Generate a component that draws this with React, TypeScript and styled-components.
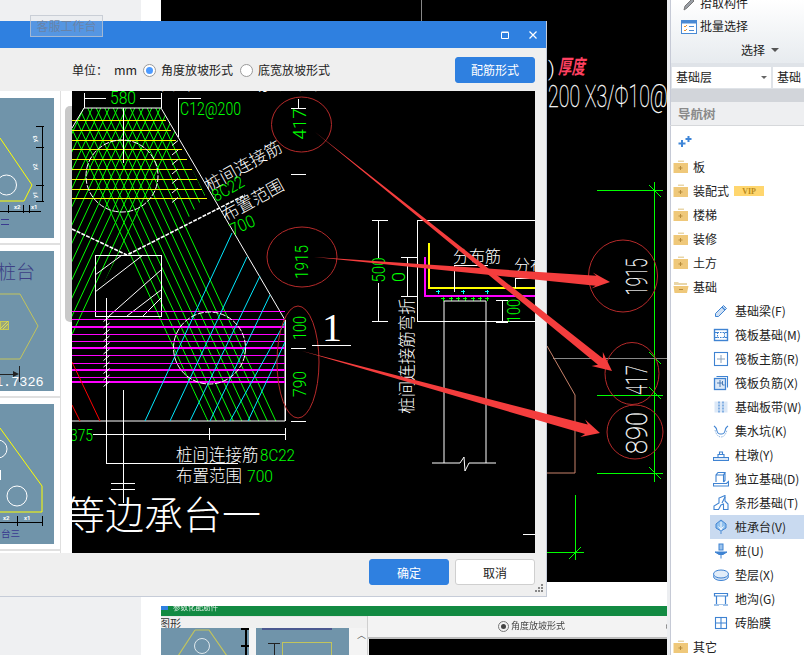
import React from "react";
import styled, { createGlobalStyle } from "styled-components";

const UI = '"Noto Sans CJK SC", "Liberation Sans", sans-serif';
const CAD = 'Roboto, "Liberation Sans", "Noto Sans CJK SC", sans-serif';
const BLUE = "#2f80e0";

const Global = createGlobalStyle`
  html, body { margin: 0; padding: 0; background: #fff; }
  #root { width: 804px; height: 655px; overflow: hidden; }
`;

const Desktop = styled.div`
  position: relative; width: 804px; height: 655px; overflow: hidden; display: flex;
  font-family: ${UI}; font-size: 12px; line-height: 1.2; color: #222; background: #fff;
`;
const LeftGutter = styled.div`width: 141px; background: #eff0f2; flex: none;`;
const WhiteGutter = styled.div`width: 20px; background: #fff; flex: none;`;
const MainColumn = styled.div`width: 506px; flex: none; display: flex; flex-direction: column;`;
const CadCanvas = styled.svg`display: block; width: 506px; height: 582px; background: #000; flex: none;`;
const WhiteGap = styled.div`height: 24px; background: #fff; flex: none;`;

/* lower window */
const LowerWindow = styled.div`flex: 1; display: flex; flex-direction: column; background: #f0f0f0; overflow: hidden;`;
const LowerTitle = styled.div`
  height: 10px; background: #128a42; display: flex; align-items: flex-start; flex: none; overflow: hidden;
  color: #dfeee4; font-size: 7.5px; line-height: 1px; filter: blur(.3px);
`;
const LowerAppIcon = styled.span`width: 7px; height: 4px; background: #2f80e0; margin-right: 5px;`;
const LowerBody = styled.div`flex: 1; display: flex;`;
const LowerLeft = styled.div`width: 206px; flex: none; display: flex; flex-direction: column; border-right: 1px solid #cfcfcf;`;
const LowerLabel = styled.div`height: 11px; font-size: 11px; line-height: 12px; color: #333; margin-left: -2px; border-top: 1px solid #e6e6e6; overflow: hidden;`;
const LowerThumbs = styled.div`flex: 1; display: flex; gap: 7px; background: #f4f4f4;`;
const LowerThumb = styled.svg<{ $w: number }>`display: block; width: ${(p) => p.$w}px; height: 27px; background: #7094aa; flex: none;`;
const LowerScrollTop = styled.div`flex: 1; text-align: center; color: #555; font-size: 9px; line-height: 14px;`;
const LowerRight = styled.div`flex: 1; display: flex; flex-direction: column;`;
const LowerBar = styled.div`
  height: 21px; flex: none; border-bottom: 2px solid #bdbdbd; background: #f3f3f3; display: flex;
  align-items: center; font-size: 9px; color: #444; padding-left: 130px; gap: 2px; filter: blur(.25px);
  overflow: hidden; white-space: nowrap;
`;
const LowerBlack = styled.div`flex: 1; background: #000; margin-left: 1px;`;
const LowerRadio = styled.span<{ $on?: boolean; $gap?: number }>`
  width: 9px; height: 9px; flex: none; border-radius: 50%; border: 1px solid #777; display: inline-flex;
  align-items: center; justify-content: center; margin-left: ${(p) => p.$gap ?? 0}px;
  &::after { content: ""; width: 5px; height: 5px; border-radius: 50%; background: ${(p) => (p.$on ? "#444" : "transparent")}; }
`;

/* right panel */
const RightPanel = styled.aside`
  width: 137px; flex: none; height: 655px; overflow: hidden; background: #fff;
  border-left: 3px solid #eceef1; box-sizing: border-box; display: flex; flex-direction: column;
  box-shadow: inset 1px 0 0 #c6cad6;
`;
const Ribbon = styled.div`
  height: 63px; flex: none; overflow: hidden; background: linear-gradient(#ffffff, #e7ebef);
  padding-left: 11px; box-shadow: inset 1px 0 0 #c6cad6;
`;
const RibbonItem = styled.div<{ $first?: boolean }>`
  height: 23px; display: flex; align-items: center; gap: 3px; font-size: 12px; color: #1c1c1c;
  margin-top: ${(p) => (p.$first ? "-8px" : "0")};
`;
const RibbonLabel = styled.div`
  height: 24px; display: flex; align-items: center; gap: 6px; padding-left: 60px; font-size: 12px; color: #222;
`;
const Caret = styled.span`width: 0; height: 0; border: 4px solid transparent; border-top: 4px solid #555; border-bottom: 0;`;
const ComboRow = styled.div`
  height: 39px; flex: none; padding: 4px 0 0 2px; display: flex; gap: 2px; box-sizing: border-box;
  background: linear-gradient(#dfe3e8 0, #dfe3e8 26px, #d2d5da 26px); box-shadow: inset 1px 0 0 #c6cad6;
`;
const Combo = styled.div<{ $w: number }>`
  width: ${(p) => p.$w}px; height: 21px; flex: none; background: #fff; display: flex; align-items: center;
  justify-content: space-between; padding: 0 4px; box-sizing: border-box; font-size: 12px; color: #222;
`;
const SmallCaret = styled.span`width: 0; height: 0; border: 3px solid transparent; border-top: 3px solid #666; border-bottom: 0;`;
const NavHeader = styled.div`
  height: 23px; flex: none; background: #eeeff1; color: #8a8a8a; font-size: 12.5px; font-weight: 700;
  padding-left: 8px; display: flex; align-items: center; border-bottom: 1px solid #d6d8db; box-shadow: inset 1px 0 0 #c6cad6;
`;
const NavTools = styled.div`height: 29px; flex: none; padding-left: 7px; display: flex; align-items: flex-start; padding-top: 6px; box-sizing: border-box;`;
const Tree = styled.div`display: flex; flex-direction: column;`;
const TreeRow = styled.div<{ $sub?: boolean; $selected?: boolean }>`
  height: 24px; flex: none; display: flex; align-items: center; white-space: nowrap; box-sizing: border-box;
  margin-left: ${(p) => (p.$sub ? "40px" : "0")};
  padding-left: 3px; gap: ${(p) => (p.$sub ? "6px" : "4px")};
  background: ${(p) => (p.$selected ? "#c9daf0" : "transparent")};
  font-size: 12px; color: #222;
`;
const VipTag = styled.span`
  width: 30px; height: 10px; background: #ffd66e; color: #b98a1c; font: 700 8px "Liberation Serif", serif;
  display: inline-flex; align-items: center; justify-content: center; margin-left: 1px;
`;

/* dialog */
const Dialog = styled.section`
  position: absolute; left: 0; top: 21px; width: 547px; height: 576px; box-sizing: border-box;
  background: #efefef; border-right: 1px solid #c6ccd8; border-bottom: 1px solid #c6ccd8;
  display: flex; flex-direction: column; z-index: 2;
`;
const TitleBar = styled.header`
  height: 27px; flex: none; background: ${BLUE}; display: flex; align-items: center; justify-content: flex-end;
  gap: 20px; padding-right: 9px;
`;
const Toolbar = styled.div`
  height: 43px; flex: none; display: flex; align-items: center; box-sizing: border-box;
  padding: 2px 11px 0 72px; font-size: 12px; color: #222;
`;
const UnitLabel = styled.span`width: 42px;`;
const UnitValue = styled.span`width: 29px; font-size: 12.5px; line-height: 14px; margin-top: -2px;`;
const RadioWrap = styled.label`display: flex; align-items: center; gap: 5px; margin-right: 7px;`;
const RadioDot = styled.span<{ $on?: boolean }>`
  width: 13px; height: 13px; box-sizing: border-box; border-radius: 50%; background: #fff; border: 1px solid #9a9a9a;
  display: inline-flex; align-items: center; justify-content: center;
  &::after { content: ""; width: 7px; height: 7px; border-radius: 50%; background: ${(p) => (p.$on ? "#4e9bff" : "transparent")}; }
`;
const ToolbarButtonSlot = styled.div`margin-top: -2px; margin-left: auto;`;
const ActionButton = styled.button<{ $primary?: boolean }>`
  display: block; width: 80px; height: 26px; box-sizing: border-box; border-radius: 3px; font-family: ${UI}; font-size: 12px; padding: 0;
  background: ${(p) => (p.$primary ? BLUE : "#fff")}; color: ${(p) => (p.$primary ? "#fff" : "#222")};
  border: 1px solid ${(p) => (p.$primary ? BLUE : "#cfcfcf")};
`;
const DialogBody = styled.div`height: 462px; flex: none; display: flex; padding-right: 11px;`;
const ThumbList = styled.div`
  width: 61px; flex: none; background: #fff; display: flex; flex-direction: column; overflow: hidden;
  padding-top: 7px; box-sizing: border-box; border-right: 1px solid #dfdfdf;
`;
const ThumbItem = styled.div`
  flex: none; height: 153px; box-sizing: border-box; padding-bottom: 6px;
  border-bottom: 2px solid #e0e0e0;
  &:not(:first-child) { padding-top: 6px; }
  &:first-child { height: 147px; }
`;
const ThumbSvg = styled.svg`display: block; width: 54px; height: 140px; background: #7094aa;`;
const ScrollTrack = styled.div`width: 11px; flex: none; background: #fff; padding-top: 15px; padding-left: 4px; box-sizing: border-box;`;
const ScrollThumb = styled.div`width: 7px; height: 216px; background: #c9c9c9; border-radius: 5px 0 0 5px;`;
const Drawing = styled.svg`display: block; width: 463px; height: 462px; background: #000; flex: none;`;
const Footer = styled.footer`
  flex: 1; display: flex; justify-content: flex-end; gap: 6px; padding: 6px 11px 0 0; position: relative;
`;
const Grip = styled.svg`position: absolute; right: 3px; bottom: 4px; width: 9px; height: 8px;`;
const Tooltip = styled.div`
  position: absolute; left: 30px; top: 15px; width: 73px; height: 22px; box-sizing: border-box; z-index: 4;
  border: 1px solid rgba(190, 195, 205, .75); background: rgba(225, 228, 232, .22); color: rgba(105, 130, 165, .95);
  font-size: 12px; text-align: center; line-height: 20px;
`;
const Overlay = styled.svg`position: absolute; left: 0; top: 0; width: 804px; height: 655px; z-index: 3; pointer-events: none;`;

/* drawing helpers */
type TP = { x: number; y: number; s: number; len?: number; fill?: string; rot?: number; anchor?: string; serif?: boolean; cjk?: boolean; w?: number; italic?: boolean; bright?: boolean; children: React.ReactNode };
const T = ({ x, y, s, len, fill = "#fff", rot, anchor = "start", serif, cjk, w, italic, bright, children }: TP) => (
  <text
    x={x} y={y} fontSize={s} fill={fill} textAnchor={anchor} fontWeight={w ?? (serif ? 400 : 300)}
    fontStyle={italic ? "italic" : undefined}
    stroke={bright ? fill : undefined} strokeWidth={bright ? 0.35 : undefined}
    fontFamily={serif ? '"Liberation Serif", serif' : cjk ? '"Noto Sans CJK SC", sans-serif' : CAD}
    textLength={len} lengthAdjust={len ? "spacingAndGlyphs" : undefined}
    transform={rot !== undefined ? `rotate(${rot} ${x} ${y})` : undefined}
  >{children}</text>
);
type LP = { p: string; c?: string; w?: number; d?: string; crisp?: boolean };
const L = ({ p, c = "#fff", w = 1, d, crisp }: LP) => (
  <path d={p} fill="none" stroke={c} strokeWidth={w} strokeDasharray={d} shapeRendering={crisp ? "crispEdges" : undefined} />
);

const family = (slope: number, step: number, from: number, to: number) => {
  let out = "";
  for (let c = from; c < to; c += step) {
    out += `M${c + slope * 60} 60L${c + slope * 460} 460`;
  }
  return out;
};
const ticks = (x: number, y0: number, y1: number, step: number) => {
  let out = "";
  for (let y = y0; y <= y1; y += step) out += `M${x - 3} ${y + 2.5}L${x + 3} ${y - 2.5}`;
  return out;
};
const arrow = (sx: number, sy: number, tx: number, ty: number, head: number, hw: number, sw: number) => {
  const dx = tx - sx, dy = ty - sy, l = Math.hypot(dx, dy), ux = dx / l, uy = dy / l, nx = -uy, ny = ux;
  const bx = tx - ux * head, by = ty - uy * head;
  const nb = head * 0.78;
  const mx = tx - ux * nb, my = ty - uy * nb;
  const pts = [
    [sx, sy],
    [mx + nx * sw, my + ny * sw],
    [bx + nx * hw, by + ny * hw],
    [tx, ty],
    [bx - nx * hw, by - ny * hw],
    [mx - nx * sw, my - ny * sw],
  ];
  return pts.map((q) => q.join(",")).join(" ");
};

const MainDrawing = () => (
  <Drawing viewBox="72 91 463 462">
    <defs>
      <clipPath id="bandA"><polygon points="72,128 84,108 161,108 205,195 187,220 280,421 207,421 72,134" /></clipPath>
      <clipPath id="bandB"><polygon points="72,128 84,108 161,108 178,137 72,345" /></clipPath>
    </defs>
    <g clipPath="url(#bandA)"><L p={family(1 / 2.15, 8.5, -260, 300)} c="#00ff00" /></g>
    <g clipPath="url(#bandB)"><L p={family(-1 / 2.15, 8.5, 100, 600)} c="#00ff00" /></g>

    {/* yellow bars */}
    {[[120, 166], [130, 171], [140, 176], [149, 182], [159, 187], [169, 192], [179, 197], [189, 202], [198, 207]].map(([y, x]) => (
      <L key={y} p={`M72 ${y}H${x}`} c="#ffff00" crisp />
    ))}
    {/* cap outline */}
    <L p="M72 128L84 108H161L178 137L285 320V421H72" />
    <L p="M84 98H161M84 93V108M161 93V108" crisp />
    <rect x="106" y="91" width="34" height="14" fill="#000" />
    <T x={110} y={104} s={18} len={26} fill="#00ff00">580</T>
    <L p="M178 137V98H201" crisp />
    <T x={180} y={115} s={19} len={61} fill="#00ff00">C12@200</T>
    <circle cx="122" cy="176" r="36" fill="none" stroke="#fff" strokeDasharray="6 1.5" />
    <L p="M123 108V163" crisp />
    <L p={ticks(175, 143, 200, 9.5)} />
    <L p="M72 229L127 255L245 195" w={1.6} d="4 1.2" />
    <T x={158} y={90} s={20} cjk>合布置向主筋范围示意</T>

    {/* rotated notes */}
    <T x={209} y={192} s={17} rot={-29} cjk>桩间连接筋</T>
    <T x={216} y={202} s={17} rot={-29} len={34} fill="#00ff00">8C22</T>
    <T x={226} y={222} s={17} rot={-29} cjk>布置范围</T>
    <T x={233} y={236} s={17} rot={-25} len={26} fill="#00ff00">700</T>

    {/* square with hatch */}
    <rect x="95.5" y="255.5" width="66" height="61" fill="none" stroke="#fff" />
    <L p="M95 275L122 255M95 292L143 255M109 316L161 270M127 316L161 290M143 316L161 298" />

    {/* magenta */}
    {[311, 319, 327, 334, 341, 348, 355, 363, 370, 377, 382].map((y) => (
      <L key={y} p={`M72 ${y}H285`} c="#ff00ff" w={[327, 348, 370, 382].includes(y) ? 2 : 1} crisp />
    ))}
    <L p="M145 421L232 233M170 421L247 257M190 421L260 276M210 421L270 295M230 421L285 322M248 421L285 342" c="#00e8ff" />
    <circle cx="209.5" cy="348" r="36" fill="none" stroke="#fff" strokeDasharray="6 1.5" />
    <L p="M72 362L100 421M72 405L80 421" c="#ff0000" />

    <L p="M106.5 298V463H238" crisp />
    <L p={ticks(106.5, 319, 385, 6.5)} />
    <L p="M123 390V503M111 483H135M111 489H135" crisp />
    <L p="M93 434H285M123 428V440M209.5 428V440M285 428V440" crisp />
    <T x={70} y={441} s={17} len={23} fill="#00ff00">375</T>

    <T x={176} y={461} s={16.5} cjk>桩间连接筋</T>
    <T x={260} y={461} s={17} len={35} fill="#00ff00">8C22</T>
    <T x={176} y={482} s={16.5} cjk>布置范围</T>
    <T x={247} y={482} s={17} len={26} fill="#00ff00">700</T>
    <T x={66} y={529} s={39} cjk>等边承台一</T>

    {/* side dims */}
    <L p="M291 108H306M291 174H306M291 348H306M291 421H306M298 99V108" crisp />
    <L p="M285 320V421" crisp />
    <T x={306} y={124} s={18} rot={-90} anchor="middle" len={31} fill="#00ff00">417</T>
    <T x={308} y={262} s={18} rot={-90} anchor="middle" len={34} fill="#00ff00">1915</T>
    <T x={306} y={328} s={18} rot={-90} anchor="middle" len={24} fill="#00ff00">100</T>
    <T x={306} y={384} s={18} rot={-90} anchor="middle" len={26} fill="#00ff00">790</T>
    <ellipse cx="301.5" cy="124.5" rx="30" ry="27.5" fill="none" stroke="#b52a2a" />
    <ellipse cx="302" cy="257" rx="35" ry="30" fill="none" stroke="#b52a2a" />
    <ellipse cx="298" cy="362" rx="21" ry="56" fill="none" stroke="#b52a2a" />
    <T x={332} y={341} s={40} serif anchor="middle">1</T>
    <L p="M312 345.5H351" crisp />

    {/* section */}
    <L p="M372 220H388M378 220V258M378 283V321M372 321H388" crisp />
    <T x={385} y={270} s={18} rot={-90} anchor="middle" len={25} fill="#00ff00">500</T>
    <T x={405} y={277} s={18} rot={-90} anchor="middle" fill="#00ff00">0</T>
    <L p="M401 257H417M407 257V296M401 296H417" crisp />
    <T x={413} y={356} s={16.5} rot={-90} anchor="middle" cjk>桩间连接筋弯折</T>
    <L p="M417 220H535M417 220V321H535" crisp />
    <L p="M425 257V296H535" c="#ff00ff" w={2} crisp />
    <L p="M429 243V288H535" c="#ffff00" w={2} crisp />
    {[438, 463, 487].map((x) => <L key={x} p={`M${x - 2} 291.5H${x + 2}M${x} 289.5V293.5`} c="#00ffff" crisp />)}
    {[443, 451, 458, 465, 473, 480, 487].map((x) => <L key={x} p={`M${x - 2} 298.5H${x + 2}M${x} 296.5V300.5`} c="#00ff00" crisp />)}
    <L p="M444 463V301H486V463M432 463H460L464 457L465 471L469 463H496" />
    <T x={453} y={262} s={16} cjk>分布筋</T>
    <T x={514} y={271} s={16} cjk>分布筋</T>
    <L p="M454 292V265H488M515 288V278H535" crisp />
    <L p="M496 300H508M502 300V322M496 322H508" crisp />
    <T x={520} y={311} s={18} rot={-90} anchor="middle" len={24} fill="#00ff00">100</T>
    <L p="M523 534H535" crisp />
  </Drawing>
);

const BackgroundCad = () => (
  <CadCanvas viewBox="161 0 506 582">
    <L p="M421.5 0V21" c="#888" crisp />
    <T x={548} y={76} s={21} fill="#fff">)</T>
    <T x={558} y={74} s={20} len={27} fill="#ff4060" w={700} italic cjk>厚度</T>
    <T x={548} y={107} s={32} len={120} w={100} bright>200 X3/Φ10@</T>
    <L p="M597 190H663M654 182V482M597 395H663M597 473H663" c="#00ff00" crisp />
    <L p="M649 185L661 197M649 352L661 364M649 387L661 399M649 467L661 479" c="#00ff00" />
    <L p="M553 358H667" c="#888" crisp />
    <L p="M547 346L575 395V473H547" c="#c8826a" />
    <L p="M575 495V560M547 552H584" c="#00ff00" crisp />
    <L p="M569 559L581 547" c="#00ff00" />
    <ellipse cx="623" cy="276" rx="34.5" ry="36" fill="none" stroke="#b52a2a" />
    <ellipse cx="632" cy="373.5" rx="27" ry="31" fill="none" stroke="#b52a2a" />
    <ellipse cx="635" cy="432" rx="28" ry="27" fill="none" stroke="#b52a2a" />
    <T x={647} y={277} s={30} rot={-90} anchor="middle" len={37} w={100} bright>1915</T>
    <T x={647} y={380} s={30} rot={-90} anchor="middle" len={30} w={100} bright>417</T>
    <T x={647} y={433} s={30} rot={-90} anchor="middle" len={42} w={100} bright>890</T>
  </CadCanvas>
);

const Thumb1 = () => (
  <ThumbSvg viewBox="0 98 54 140">
    <L p="M0 138L32 185L24 201H0" c="#ffff00" />
    <circle cx="6.5" cy="185" r="10" fill="none" stroke="#fff" />
    <L p="M42 126V201M36 126H44M36 147H44M36 185H44M36 201H44M0 211H41M8 205V213M23 205V213M29 205V213" c="#000" crisp />
    <T x={14} y={209} s={6} w={700}>x2</T>
    <T x={31} y={209} s={6} w={700}>x1</T>
    <T x={37} y={142} s={6} rot={-90} w={700}>y3</T>
    <T x={37} y={170} s={6} rot={-90} w={700}>y2</T>
    <T x={37} y={198} s={6} rot={-90} w={700}>y1</T>
    <L p="M1 219H9M1 224H9" c="#3a3a90" crisp />
  </ThumbSvg>
);
const Thumb2 = () => (
  <ThumbSvg viewBox="0 251 54 140">
    <T x={-3} y={279} s={19} fill="#3c3f85" cjk>桩台</T>
    <L p="M0 294H20L38 326L20 359H0" c="#c2c45c" />
    <rect x="0.5" y="321.5" width="8" height="8" fill="#9aa87a" stroke="#c8ca52" />
    <L p="M0 329L8 321M3 329L8 324" c="#d8da60" />
    <L p="M0 374H16M19.5 366V382" c="#222" crisp />
    <polygon points="19,374 13,371 13,377" fill="#222" />
    <text x="-5" y="386" fontSize="13.5" fill="#fff" fontFamily='"Liberation Mono", monospace'>1.7326</text>
  </ThumbSvg>
);
const Thumb3 = () => (
  <ThumbSvg viewBox="0 404 54 140">
    <L p="M0 428L42 486V512H0" c="#ffff00" />
    <circle cx="17" cy="496" r="10" fill="none" stroke="#fff" />
    <circle cx="-2" cy="449" r="9" fill="none" stroke="#fff" />
    <L p="M0.5 470V480" />
    <L p="M0 522H42M17.5 516V526M42.5 516V526" c="#000" crisp />
    <T x={3} y={520} s={6} w={700}>x2</T>
    <T x={24} y={520} s={6} w={700}>x1</T>
    <T x={1} y={537} s={9.5} w={400} fill="#3a3a90" cjk>台三</T>
  </ThumbSvg>
);

/* icons */
const I = styled.svg`display: block; width: 16px; height: 16px; flex: none;`;
const ic = "#3f83d2";
const Icon = ({ k }: { k: string }) => {
  const s = { fill: "none", stroke: ic, strokeWidth: 1.1 } as const;
  switch (k) {
    case "beam": return <I viewBox="0 0 16 16"><path d="M2.5 10.5L10.5 2.5L13.5 5.5L5.5 13.5H2.5Z" fill="#cfe0f4" stroke={ic} /><path d="M9 4L12 7" {...s} /></I>;
    case "raft": return <I viewBox="0 0 16 16"><rect x="1.5" y="2.5" width="13" height="11" {...s} strokeWidth={1.4} /><rect x="4.5" y="5.5" width="7" height="5" {...s} strokeDasharray="1.5 1" /><path d="M1.5 5.5H4.5M11.5 5.5H14.5M1.5 10.5H4.5M11.5 10.5H14.5" {...s} /></I>;
    case "main": return <I viewBox="0 0 16 16"><rect x="1.5" y="1.5" width="13" height="13" {...s} /><path d="M8 4V12M4 8H12" fill="none" stroke="#8aa0b8" /></I>;
    case "neg": return <I viewBox="0 0 16 16"><rect x="1.5" y="3.5" width="11" height="11" fill="#dbe8f7" stroke={ic} strokeWidth={1.3} /><path d="M3.5 1.5H14.5V12.5" {...s} /><path d="M4 8H10M7 5V12M9.5 6V10H11.5" fill="none" stroke="#4a7bb5" /></I>;
    case "strip": return <I viewBox="0 0 16 16"><rect x="1.5" y="2.5" width="13" height="11" fill="#dbe8f7" /><path d="M6 2.5V13.5M10 2.5V13.5" {...s} strokeDasharray="2 1" /></I>;
    case "pit": return <I viewBox="0 0 16 16"><path d="M1 3C2 4 3 4 3.5 6C4 9 5 11 7 11H9C11 11 12 9 12.5 6C13 4 14 4 15 3" {...s} /><path d="M2 7C3 11 5 14 8 14C11 14 13 11 14 7" fill="none" stroke="#8fb5e2" strokeDasharray="1.5 1" /></I>;
    case "pier": return <I viewBox="0 0 16 16"><rect x="0.5" y="10.5" width="15" height="3" fill="#dbe8f7" stroke={ic} /><path d="M5 10.5V7.5H11V10.5M6.5 7.5V5H9.5V7.5" {...s} /></I>;
    case "iso": return <I viewBox="0 0 16 16"><path d="M0.5 12.5H13.5L15.5 10.5V15H0.5Z" {...s} /><path d="M3 11V4L5 1.5H12L10.5 4V11M3 4H10.5M10.5 11L12 9.5V1.5" {...s} /></I>;
    case "bar": return <I viewBox="0 0 16 16"><path d="M1 14.5V11L6 8V3L12 0.5V6L15 9V14.5H10.5V9L8 10L5.5 14.5Z" {...s} /><path d="M12 2L9 8" {...s} /></I>;
    case "cap": return <I viewBox="0 0 16 16"><path d="M8 1L13 5V9L8 12L3 9V5Z" fill="#8fc0ee" stroke={ic} /><path d="M8 3V15M5.5 7.5L8 10.5L10.5 7.5" fill="none" stroke="#fff" /><path d="M8 11V15" {...s} /></I>;
    case "pile": return <I viewBox="0 0 16 16"><rect x="6" y="1" width="4" height="6" fill="#9cc3ec" stroke={ic} /><path d="M2 9H14L10 11.5H6ZM8 11.5V15.5" fill={ic} stroke={ic} /></I>;
    case "pad": return <I viewBox="0 0 16 16"><ellipse cx="8" cy="9.5" rx="7.5" ry="4" fill="#cfe0f4" stroke={ic} /><ellipse cx="8" cy="7" rx="7.5" ry="4" fill="#e2edf9" stroke={ic} /></I>;
    case "ditch": return <I viewBox="0 0 16 16"><path d="M1.5 2.5H14.5V5H1.5ZM3.5 5V13M12.5 5V13M1 14H6M10 14H15" {...s} strokeWidth={1.2} /><path d="M5 13.5H11" fill="none" stroke="#a6c6ea" /></I>;
    default: return <I viewBox="0 0 16 16"><rect x="2.5" y="2.5" width="11" height="11" {...s} /><path d="M8 2.5V13.5M2.5 8H13.5" {...s} /></I>;
  }
};
const Folder = ({ open }: { open?: boolean }) =>
  open ? (
    <I viewBox="0 0 16 16"><path d="M1 3H5L6 4H14V6H1Z" fill="#e9d6a8" /><path d="M0.5 7H15.5L14 14H1.5Z" fill="#efc87a" /><path d="M6 10.5H10" stroke="#b58a3a" /></I>
  ) : (
    <I viewBox="0 0 16 16"><path d="M5 1.5H11V3H5Z" fill="#e9d6a8" /><path d="M0.5 4H15V14H0.5Z" fill="#efc87a" /><path d="M5.5 9H9.5M7.5 7V11" stroke="#b58a3a" /></I>
  );

const top1 = ["板", "装配式", "楼梯", "装修", "土方"];
const subs: [string, string][] = [
  ["beam", "基础梁(F)"], ["raft", "筏板基础(M)"], ["main", "筏板主筋(R)"], ["neg", "筏板负筋(X)"],
  ["strip", "基础板带(W)"], ["pit", "集水坑(K)"], ["pier", "柱墩(Y)"], ["iso", "独立基础(D)"],
  ["bar", "条形基础(T)"], ["cap", "桩承台(V)"], ["pile", "桩(U)"], ["pad", "垫层(X)"],
  ["ditch", "地沟(G)"], ["mold", "砖胎膜"],
];

export default function App() {
  return (
    <>
      <Global />
      <Desktop>
        <LeftGutter />
        <WhiteGutter />
        <MainColumn>
          <BackgroundCad />
          <WhiteGap />
          <LowerWindow>
            <LowerTitle><LowerAppIcon />参数化配筋件</LowerTitle>
            <LowerBody>
              <LowerLeft>
                <LowerLabel>图形</LowerLabel>
                <LowerThumbs>
                  <LowerThumb $w={88} viewBox="161 628 88 27">
                    <L p="M195 630H209L227 656M195 630L178 656" c="#c2c45c" w={1.2} />
                    <circle cx="202" cy="646" r="7.5" fill="none" stroke="#dfe8ec" />
                    <L p="M246 629V655M241 629H249M241 646H249" c="#000" w={1.2} crisp />
                  </LowerThumb>
                  <LowerThumb $w={93} viewBox="256 628 93 27">
                    <L p="M268 643H280M274 643V655" c="#222" crisp />
                    <rect x="282.5" y="642.5" width="49" height="20" fill="none" stroke="#c2c45c" />
                    <rect x="262" y="628" width="70" height="2" fill="#3c3f85" opacity=".7" />
                  </LowerThumb>
                  <LowerScrollTop>︿</LowerScrollTop>
                </LowerThumbs>
              </LowerLeft>
              <LowerRight>
                <LowerBar><LowerRadio $on />角度放坡形式<LowerRadio $gap={99} /></LowerBar>
                <LowerBlack />
              </LowerRight>
            </LowerBody>
          </LowerWindow>
        </MainColumn>
        <RightPanel>
          <Ribbon>
            <RibbonItem $first>
              <I viewBox="0 0 16 16"><path d="M3 14L4 10L11 3L13 5L6 12Z" fill="#9a9fa6" stroke="#777" /></I>
              拾取构件
            </RibbonItem>
            <RibbonItem>
              <I viewBox="0 0 16 16"><rect x="0.5" y="1.5" width="15" height="13" fill="#fff" stroke="#4a8ad4" /><rect x="0.5" y="1.5" width="15" height="3" fill="#4a8ad4" /><path d="M3 7L4 8L6 6M3 11L4 12L6 10" fill="none" stroke="#e8912c" /><path d="M8 7.5H13M8 11.5H13" stroke="#4a8ad4" /></I>
              批量选择
            </RibbonItem>
            <RibbonLabel>选择<Caret /></RibbonLabel>
          </Ribbon>
          <ComboRow>
            <Combo $w={99}>基础层<SmallCaret /></Combo>
            <Combo $w={60}>基础</Combo>
          </ComboRow>
          <NavHeader>导航树</NavHeader>
          <NavTools>
            <I viewBox="0 0 16 16"><path d="M5 8V15M1.5 11.5H8.5M11.5 4V10M8.5 7H14.5" stroke="#3f86d8" strokeWidth="2" fill="none" /></I>
          </NavTools>
          <Tree>
            {top1.map((t) => (
              <TreeRow key={t}>
                <Folder />{t}{t === "装配式" && <VipTag>VIP</VipTag>}
              </TreeRow>
            ))}
            <TreeRow><Folder open />基础</TreeRow>
            {subs.map(([k, t]) => (
              <TreeRow key={k} $sub $selected={k === "cap"}>
                <Icon k={k} />{t}
              </TreeRow>
            ))}
            <TreeRow><Folder />其它</TreeRow>
          </Tree>
        </RightPanel>

        <Dialog>
          <TitleBar>
            <svg width="8" height="8" viewBox="0 0 8 8"><path d="M.5 1.5H7.5V7.5H.5Z M.5 1H7.5" fill="none" stroke="#fff" /></svg>
            <svg width="8" height="8" viewBox="0 0 8 8"><path d="M.5 .5L7.5 7.5M7.5 .5L.5 7.5" fill="none" stroke="#fff" strokeWidth="1.2" /></svg>
          </TitleBar>
          <Toolbar>
            <UnitLabel>单位：</UnitLabel>
            <UnitValue>mm</UnitValue>
            <RadioWrap><RadioDot $on />角度放坡形式</RadioWrap>
            <RadioWrap><RadioDot />底宽放坡形式</RadioWrap>
            <ToolbarButtonSlot><ActionButton $primary>配筋形式</ActionButton></ToolbarButtonSlot>
          </Toolbar>
          <DialogBody>
            <ThumbList>
              <ThumbItem><Thumb1 /></ThumbItem>
              <ThumbItem><Thumb2 /></ThumbItem>
              <ThumbItem><Thumb3 /></ThumbItem>
            </ThumbList>
            <ScrollTrack><ScrollThumb /></ScrollTrack>
            <MainDrawing />
          </DialogBody>
          <Footer>
            <ActionButton $primary>确定</ActionButton>
            <ActionButton>取消</ActionButton>
            <Grip viewBox="0 0 9 8"><path d="M7 0h2v2H7zM4 3h2v2H4zM7 3h2v2H7zM1 6h2v2H1zM4 6h2v2H4zM7 6h2v2H7z" fill="#888" /></Grip>
          </Footer>
        </Dialog>

        <Tooltip>客服工作台</Tooltip>
        <Overlay viewBox="0 0 804 655">
          <polygon points={arrow(315, 132, 612, 371, 19, 9, 4)} fill="#f43d3d" />
          <polygon points={arrow(314, 257, 610, 282, 18, 8, 5)} fill="#f43d3d" />
          <polygon points={arrow(302, 351, 600, 433, 18, 9, 5)} fill="#f43d3d" />
        </Overlay>
      </Desktop>
    </>
  );
}
